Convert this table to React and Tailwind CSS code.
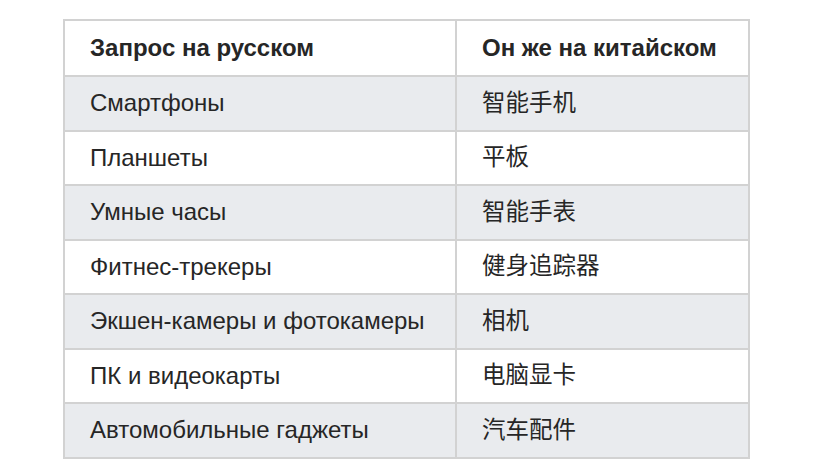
const rows = [
  ['Смартфоны', '智能手机'],
  ['Планшеты', '平板'],
  ['Умные часы', '智能手表'],
  ['Фитнес-трекеры', '健身追踪器'],
  ['Экшен-камеры и фотокамеры', '相机'],
  ['ПК и видеокарты', '电脑显卡'],
  ['Автомобильные гаджеты', '汽车配件'],
];

const font = { fontFamily: '"Liberation Sans", "Noto Sans CJK SC", sans-serif' };

export default function App() {
  return (
    <div className="w-[840px] h-[472px] bg-white pt-[19px] pl-[63px]" style={font}>
      <table className="border-collapse text-[#262626] text-[24px] leading-none">
        <thead>
          <tr className="h-[56px]">
            <th className="w-[392px] border-2 border-[#d2d2d2] text-left font-bold pl-[25px]">Запрос на русском</th>
            <th className="w-[293px] border-2 border-[#d2d2d2] text-left font-bold pl-[25px]">Он же на китайском</th>
          </tr>
        </thead>
        <tbody>
          {rows.map(([ru, zh], i) => (
            <tr key={ru} className={`h-[54.5px] ${i % 2 === 0 ? 'bg-[#e9ebee]' : 'bg-white'}`}>
              <td className="border-2 border-[#d2d2d2] pl-[25px]">{ru}</td>
              <td className="border-2 border-[#d2d2d2] pl-[25px] text-[23.5px]">{zh}</td>
            </tr>
          ))}
        </tbody>
      </table>
    </div>
  );
}
